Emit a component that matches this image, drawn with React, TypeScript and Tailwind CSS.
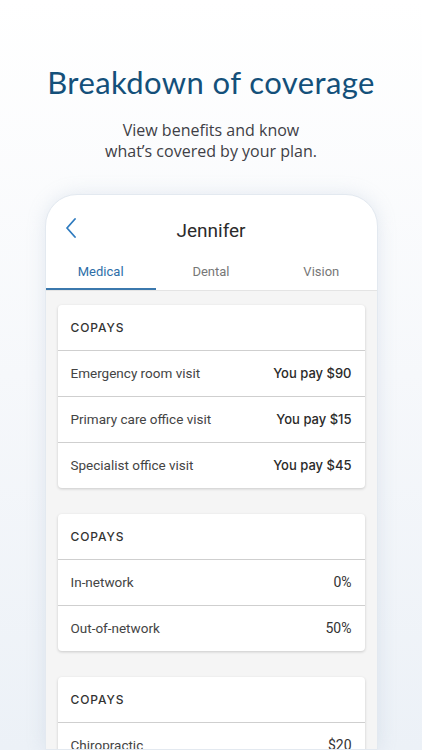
const sections = [
  {
    title: 'COPAYS',
    rows: [
      { label: 'Emergency room visit', value: 'You pay $90', bold: true },
      { label: 'Primary care office visit', value: 'You pay $15', bold: true },
      { label: 'Specialist office visit', value: 'You pay $45', bold: true },
    ],
  },
  {
    title: 'COPAYS',
    rows: [
      { label: 'In-network', value: '0%', bold: false },
      { label: 'Out-of-network', value: '50%', bold: false },
    ],
  },
  {
    title: 'COPAYS',
    rows: [
      { label: 'Chiropractic', value: '$20', bold: false },
      { label: 'Acupuncture', value: '$20', bold: false },
    ],
  },
];

export default function App() {
  return (
    <div
      className="w-[422px] h-[750px] overflow-hidden flex flex-col items-center bg-gradient-to-b from-white via-[#f6f8fb] to-[#ecf1f7]"
      style={{ fontFamily: '"Open Sans", Lato, sans-serif' }}
    >
      {/* Heading */}
      <h1
        className="mt-[62px] text-[31px] leading-[40px] text-[#14507a] tracking-[0.4px] shrink-0"
        style={{ fontFamily: 'Lato, sans-serif' }}
      >
        Breakdown of coverage
      </h1>
      <p className="mt-[18px] text-center text-[16px] leading-[21px] text-[#3f3f46] shrink-0">
        View benefits and know
        <br />
        what’s covered by your plan.
      </p>

      {/* Phone */}
      <div
        className="mt-[32px] w-[333px] flex-1 rounded-t-[32px] bg-white border border-[#e3e9f0] shadow-[0_0_18px_rgba(160,180,205,0.25)] overflow-hidden flex flex-col"
        style={{ fontFamily: 'Roboto, sans-serif' }}
      >
        <div className="h-[62px] shrink-0 flex items-center relative">
          <svg
            className="absolute left-[19px] top-[23px]"
            width="12"
            height="20"
            viewBox="0 0 12 20"
            fill="none"
            stroke="#2f7bbf"
            strokeWidth="1.8"
            strokeLinecap="round"
            strokeLinejoin="round"
          >
            <path d="M10 1L2 10l8 9" />
          </svg>
          <div className="w-full text-center text-[19px] text-[#2b2b2b] pt-[10px]">Jennifer</div>
        </div>

        <div className="flex shrink-0 border-b border-[#e4e4e4]">
          <div className="flex-1 h-[33px] flex items-start justify-center pt-[5px] text-[13px] text-[#2d6ea8] border-b-2 border-[#3b78ad] -mb-px">
            Medical
          </div>
          <div className="flex-1 h-[33px] flex items-start justify-center pt-[5px] text-[13px] text-[#777]">
            Dental
          </div>
          <div className="flex-1 h-[33px] flex items-start justify-center pt-[5px] text-[13px] text-[#777]">
            Vision
          </div>
        </div>

        <div className="flex-1 bg-[#f5f5f5] px-[12px] pt-[14px] flex flex-col gap-[26px]">
          {sections.map((s, i) => (
            <div
              key={i}
              className="bg-white rounded-[4px] shadow-[0_1px_3px_rgba(0,0,0,0.18)] shrink-0"
            >
              <div
                className="h-[45px] flex items-center px-[13px] text-[12px] font-medium tracking-[0.9px] text-[#333]"
                style={{ fontFamily: 'Inter, Roboto, sans-serif' }}
              >
                {s.title}
              </div>
              {s.rows.map((r) => (
                <div
                  key={r.label}
                  className="h-[46px] flex items-center justify-between px-[13px] border-t border-[#cfcfcf] text-[13.5px]"
                >
                  <span className="text-[#444]">{r.label}</span>
                  <span
                    className={r.bold ? 'font-medium text-[#2a2a2a] text-[13px]' : 'text-[#333] text-[14px]'}
                    style={r.bold ? { fontFamily: 'Inter, Roboto, sans-serif' } : undefined}
                  >
                    {r.value}
                  </span>
                </div>
              ))}
            </div>
          ))}
        </div>
      </div>
    </div>
  );
}
